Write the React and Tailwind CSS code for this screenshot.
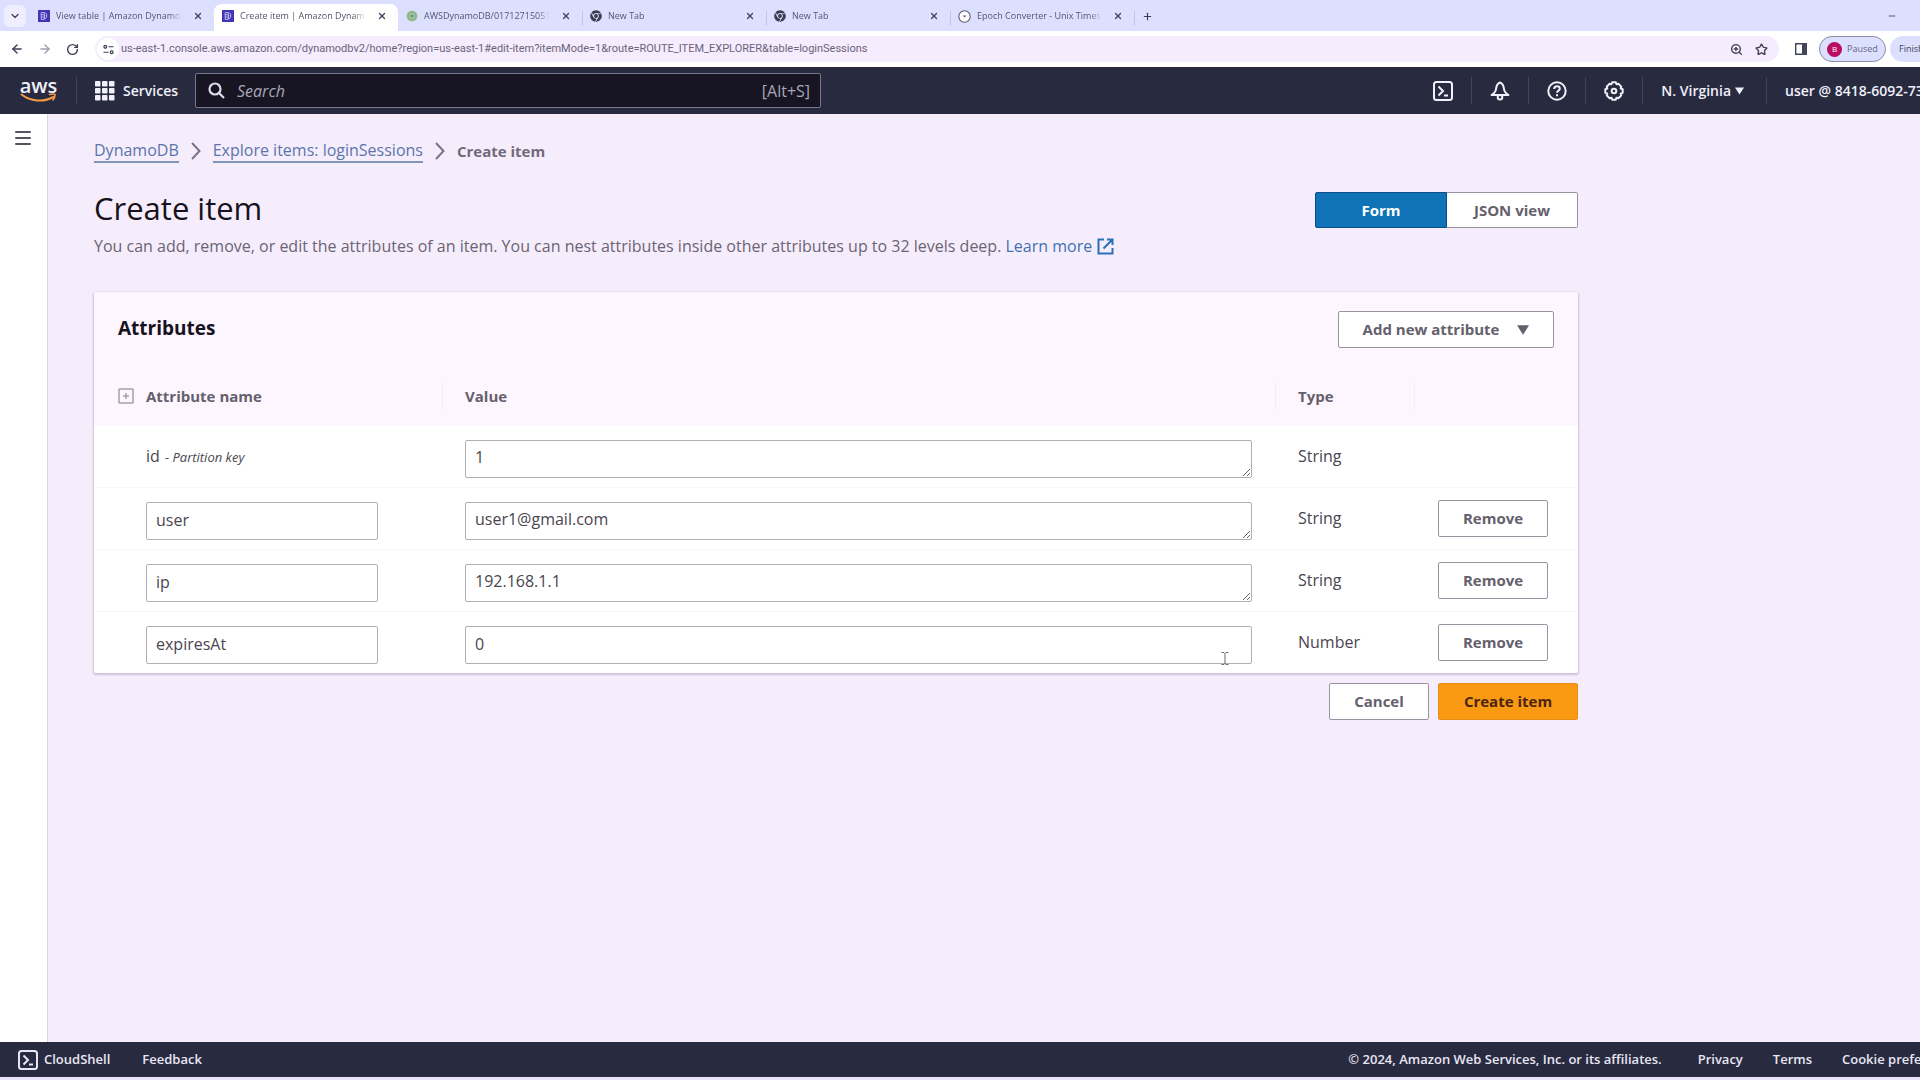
import React from "react";
import { FaChrome } from "react-icons/fa";
import { ArrowLeft, ArrowRight, ChevronDown, Minus, Plus, RotateCw, Star, X, ZoomIn } from "lucide-react";

const tabs = [
  { title: "View table | Amazon DynamoDB", icon: "dynamo" },
  { title: "Create item | Amazon DynamoDB", icon: "dynamo", active: true },
  { title: "AWSDynamoDB/0171271505199", icon: "bucket" },
  { title: "New Tab", icon: "chrome", divider: true },
  { title: "New Tab", icon: "chrome", divider: true },
  { title: "Epoch Converter - Unix Timestamp", icon: "epoch", divider: true },
];

const attributes = [
  { name: "id", value: "1", type: "String", partitionKey: true },
  { name: "user", value: "user1@gmail.com", type: "String" },
  { name: "ip", value: "192.168.1.1", type: "String" },
  { name: "expiresAt", value: "0", type: "Number" },
];

function TabIcon({ name }) {
  if (name === "chrome") return <FaChrome className="size-3 shrink-0 text-[#3c3d52]" />;
  if (name === "dynamo") {
    return (
      <svg viewBox="0 0 12 12" className="size-3 shrink-0">
        <rect width="12" height="12" rx="0.5" fill="#4235b5" />
        <path d="M3.2 2.6h3.2v6.8H3.2zM3.2 4.8h3.2M3.2 7.1h3.2M7.4 2.8l1.5 1.4-.9 1.6h1L7.3 9" fill="none" stroke="#d9d4ff" strokeWidth="0.8" />
      </svg>
    );
  }
  if (name === "bucket") {
    return (
      <svg viewBox="0 0 12 12" className="size-3 shrink-0">
        <circle cx="6" cy="6" r="5.6" fill="#a5c8a7" />
        <circle cx="6" cy="6" r="3.9" fill="none" stroke="#7fab86" strokeWidth="1.2" />
        <circle cx="6" cy="6" r="1.8" fill="#6f9f78" />
      </svg>
    );
  }
  return (
    <svg viewBox="0 0 13 13" className="size-[13px] shrink-0">
      <circle cx="6.5" cy="6.5" r="5.7" fill="#fff" stroke="#5c5c70" strokeWidth="1.1" />
      <path d="M4.7 5.5h3.6L6.5 7.6z" fill="#5c5c70" />
    </svg>
  );
}

function Caret({ className }) {
  return (
    <svg viewBox="0 0 10 8" className={className} fill="currentColor">
      <path d="M0 0h10L5 8z" />
    </svg>
  );
}

function ShellIcon() {
  return (
    <svg viewBox="0 0 20 20" className="size-5 shrink-0" fill="none" stroke="currentColor" strokeWidth="2">
      <rect x="1" y="1" width="18" height="18" rx="2.5" />
      <path d="M5.5 5.5 10 10l-4.5 4.5M11 14.5h4" />
    </svg>
  );
}

function BellIcon() {
  return (
    <svg viewBox="0 0 20 20" className="size-5" fill="none" stroke="currentColor" strokeWidth="2" strokeLinejoin="round">
      <path d="M10 1.5c-3 1-3.6 3.3-4 6.5-.3 2.8-1.6 4.3-4.5 6h17c-2.9-1.7-4.2-3.2-4.5-6-.4-3.2-1-5.5-4-6.5z" />
      <circle cx="10" cy="16.3" r="2.3" fill="#282b3f" />
    </svg>
  );
}

function HelpIcon() {
  return (
    <svg viewBox="0 0 20 20" className="size-5" fill="none" stroke="currentColor" strokeWidth="2">
      <circle cx="10" cy="10" r="8.7" />
      <path d="M7.2 8c0-1.7 1.2-2.7 2.8-2.7s2.8 1 2.8 2.4c0 1.9-2.8 2-2.8 4.1M10 13.2v2" />
    </svg>
  );
}

function GearIcon() {
  return (
    <svg viewBox="0 0 20 20" className="size-5" fill="none" stroke="currentColor" strokeWidth="2" strokeLinejoin="round">
      <path d="M8.2 1.3h3.6l.7 1.9 1.9-.5 2.9 2.9-.6 1.9 2 .7v3.6l-2 .7.6 1.9-2.9 2.9-1.9-.6-.7 2H8.200l-.7-2-1.900.6-2.900-2.900.6-1.900-2-.7V8.200l2-.7-.6-1.900 2.900-2.900 1.900.5z" />
      <circle cx="10" cy="10" r="2.3" />
    </svg>
  );
}

function BrowserChrome() {
  return (
    <div className="text-[#3f3f55]">
      <div className="flex h-[31px] items-end bg-[#dddfff] pl-1">
        <button aria-label="Search tabs" className="mr-1 mb-1 flex h-[22px] w-[22px] items-center justify-center self-end rounded-md bg-[#eeeeff]">
          <ChevronDown className="size-3" strokeWidth={2.5} />
        </button>
        {tabs.map((tab, i) => (
          <div
            key={i}
            className={`flex h-[27px] w-[184px] items-center gap-[6px] pr-[11px] pb-[3px] pl-2 ${tab.active ? "rounded-t-lg bg-white" : ""} ${tab.divider ? "bg-[linear-gradient(#c3c4e2,#c3c4e2)] bg-[length:1px_14px] bg-left bg-no-repeat" : ""}`}
          >
            <TabIcon name={tab.icon} />
            <span className="mr-[5px] min-w-0 flex-1 overflow-hidden text-[9px] whitespace-nowrap text-[#55556b] [mask-image:linear-gradient(to_right,black_90%,transparent)]">
              {tab.title}
            </span>
            <button aria-label={`Close ${tab.title}`}>
              <X className="size-[10px]" strokeWidth={3} />
            </button>
          </div>
        ))}
        <button aria-label="New tab" className="flex h-[27px] items-center bg-[linear-gradient(#c3c4e2,#c3c4e2)] bg-[length:1px_14px] bg-left bg-no-repeat pb-[3px] pl-2">
          <Plus className="size-[11px]" strokeWidth={2.5} />
        </button>
        <button aria-label="Minimize" className="mr-[23px] ml-auto flex h-[27px] items-center pb-[3px]">
          <Minus className="size-[10px]" />
        </button>
      </div>
      <div className="flex h-9 items-center bg-white pl-[10px]">
        <button aria-label="Back" className="mr-[14px]"><ArrowLeft className="size-[14px]" strokeWidth={2.5} /></button>
        <button aria-label="Forward" className="mr-[14px] text-[#a3a3b1]"><ArrowRight className="size-[14px]" strokeWidth={2.5} /></button>
        <button aria-label="Reload" className="mr-4"><RotateCw className="size-[13px]" strokeWidth={2.5} /></button>
        <div className="flex h-[26px] flex-1 items-center rounded-full bg-[#f5ecfd] pr-[11px] pl-[2px]">
          <span className="flex size-[22px] items-center justify-center rounded-full bg-white">
            <svg viewBox="0 0 12 12" className="size-[11px]" fill="none" stroke="currentColor" strokeWidth="1.3">
              <circle cx="2.5" cy="3" r="1.5" />
              <path d="M6 3h5.500M.5 9H6" />
              <circle cx="9.5" cy="9" r="1.5" />
            </svg>
          </span>
          <input
            aria-label="Address"
            defaultValue="us-east-1.console.aws.amazon.com/dynamodbv2/home?region=us-east-1#edit-item?itemMode=1&route=ROUTE_ITEM_EXPLORER&table=loginSessions"
            className="ml-[2px] min-w-0 flex-1 bg-transparent font-['Roboto',sans-serif] text-[11px] text-[#6a657a] outline-none"
          />
          <ZoomIn className="mr-3 size-[13px]" strokeWidth={2.5} />
          <Star className="size-[13px]" strokeWidth={2.5} />
        </div>
        <svg viewBox="0 0 12 12" className="mr-3 ml-4 size-3">
          <path d="M.7.7h10.600v10.600H.7z" fill="none" stroke="#44445a" strokeWidth="1.400" />
          <path d="M7 1h4.500v10H7z" fill="#44445a" />
        </svg>
        <button className="flex h-[26px] w-[67px] items-center gap-[5px] rounded-full border border-[#8b8ca8] bg-[#dddfff] pl-[7px] text-[9px] text-[#66668a]">
          <span className="flex size-[15px] items-center justify-center rounded-full bg-[#b80d62] text-[8px] text-white">B</span>
          Paused
        </button>
        <button className="ml-1 h-[26px] w-[30px] overflow-hidden rounded-l-full bg-[#dddfff] pl-[9px] text-left text-[9px] whitespace-nowrap">Finish</button>
      </div>
    </div>
  );
}

function NavDivider() {
  return <span className="h-[27px] w-px bg-[#414559]" />;
}

function ConsoleNav() {
  return (
    <header className="flex h-[47px] items-center overflow-hidden bg-[#282b3f] pl-5 text-sm font-semibold text-[#f0effa]">
      <a href="#home" aria-label="AWS home" className="flex w-[37px] flex-col items-center text-xl leading-[14px]">
        aws
        <svg viewBox="0 0 37 10" className="h-[10px] w-[37px]" fill="none" stroke="#f59b42" strokeWidth="2" strokeLinecap="round">
          <path d="M1.5 1.5c9 7 22 8 32 2.5" />
          <path d="M29.5 1.5c2.5-.7 4.5-.6 5.5 0 .3 1.8-.5 3.8-2 5.5" strokeWidth="1.5" />
        </svg>
      </a>
      <span className="mr-[18px] ml-[19px] h-[27px] w-px bg-[#414559]" />
      <button className="flex items-center gap-2">
        <svg viewBox="0 0 20 20" className="size-5" fill="currentColor">
          {[0, 7, 14].map((y) => [0, 7, 14].map((x) => <rect key={`${x}-${y}`} x={x} y={y} width="5.5" height="5.5" rx="0.8" />))}
        </svg>
        Services
      </button>
      <label className="ml-[17px] flex h-[35px] w-[626px] items-center rounded-xs border border-[#787990] bg-[#171522] pr-[10px] pl-3 text-base font-normal text-[#a9a7b8]">
        <svg viewBox="0 0 17 17" className="size-[17px] text-[#dddbea]" fill="none" stroke="currentColor" strokeWidth="2.2">
          <circle cx="7" cy="7" r="5.5" />
          <path d="m11 11 5 5" />
        </svg>
        <input type="search" aria-label="Search" placeholder="Search" className="ml-3 min-w-0 flex-1 bg-transparent italic outline-none placeholder:text-[#a9a7b8]" />
        <span>[Alt+S]</span>
      </label>
      <div className="ml-auto flex items-center gap-[18px]">
        <button aria-label="CloudShell"><ShellIcon /></button>
        <NavDivider />
        <button aria-label="Notifications"><BellIcon /></button>
        <NavDivider />
        <button aria-label="Help"><HelpIcon /></button>
        <NavDivider />
        <button aria-label="Settings"><GearIcon /></button>
        <NavDivider />
        <button className="mr-1 flex items-center gap-1 whitespace-nowrap">
          N. Virginia <Caret className="h-2 w-[9px]" />
        </button>
        <NavDivider />
        <button className="w-[135px] overflow-hidden text-left whitespace-nowrap">user @ 8418-6092-73</button>
      </div>
    </header>
  );
}

function Crumb() {
  return (
    <svg viewBox="0 0 10 18" className="h-[18px] w-[10px]" fill="none" stroke="#79738a" strokeWidth="2">
      <path d="m1 1 7.5 8L1 17" />
    </svg>
  );
}

const plainButton = "h-[37px] rounded-xs border border-[#9a94a2] bg-white text-[15px] font-bold text-[#65606c]";
const field = "block h-[38px] w-full rounded-xs border border-[#b1aeb5] bg-white px-[9px] text-base text-[#4a4550] outline-none";

function AttributeRow({ attribute, first }) {
  const { name, value, type, partitionKey } = attribute;
  const cell = `align-top ${first ? "" : "border-t border-[#f8f5fa]"}`;
  return (
    <tr>
      <td className={`${cell} pr-16 pl-[52px] ${partitionKey ? "pt-[18px]" : "pt-[14px]"}`}>
        {partitionKey ? (
          <>
            {name} <em className="ml-px text-[13px]">- Partition key</em>
          </>
        ) : (
          <input aria-label="Attribute name" defaultValue={name} className={`${field} pb-[2px]`} />
        )}
      </td>
      <td className={`${cell} px-[23px] pt-[14px] pb-[9px]`}>
        {type === "Number" ? (
          <input aria-label={`${name} value`} defaultValue={value} className={`${field} pb-[2px]`} />
        ) : (
          <textarea aria-label={`${name} value`} defaultValue={value} rows={1} className={`${field} overflow-hidden py-1`} />
        )}
      </td>
      <td className={`${cell} pt-[18px] pl-[23px]`}>{type}</td>
      <td className={`${cell} pt-3 pl-[23px]`}>
        {!partitionKey && <button className={`${plainButton} w-[110px]`}>Remove</button>}
      </td>
    </tr>
  );
}

function Attributes() {
  return (
    <section className="mt-[34px] rounded-xs bg-white shadow-[0_1px_2px_1px_#cfc3d8]">
      <div className="flex items-start justify-between bg-[#fdf6ff] px-6 pt-[19px] pb-[18px]">
        <h2 className="text-[19px] leading-[34px] font-bold text-[#17121c]">Attributes</h2>
        <button className={`${plainButton} flex w-[216px] items-center justify-center gap-[18px]`}>
          Add new attribute <Caret className="h-[10px] w-3" />
        </button>
      </div>
      <table className="w-full table-fixed border-separate border-spacing-0 text-[#4a4550]">
        <thead className="bg-[#fdf6ff] text-left text-[15px] text-[#65606c]">
          <tr>
            <th className="h-[60px] w-[348px] pl-6">
              <span className="flex items-center gap-3">
                <svg viewBox="0 0 16 16" className="size-4" fill="none" stroke="#a79fae" strokeWidth="1.5">
                  <rect x="1" y="1" width="14" height="14" rx="0.5" />
                  <path d="M8 5v6M5 8h6" />
                </svg>
                Attribute name
              </span>
            </th>
            <th>
              <span className="block border-l border-[#f3ecf6] pl-[22px] leading-7">Value</span>
            </th>
            <th className="w-[140px]">
              <span className="block border-x border-[#f3ecf6] pl-[22px] leading-7">Type</span>
            </th>
            <th className="w-[163px]" aria-label="Actions" />
          </tr>
        </thead>
        <tbody>
          {attributes.map((attribute, i) => (
            <AttributeRow key={attribute.name} attribute={attribute} first={i === 0} />
          ))}
        </tbody>
      </table>
    </section>
  );
}

function TextCursor() {
  return (
    <svg viewBox="0 0 8 13" className="pointer-events-none absolute top-[652px] left-[1221px] h-[13px] w-2" fill="none" stroke="#6c6672">
      <path d="M.5.5h2.500l1 1 1-1h2.500M.5 12.500h2.500l1-1 1 1h2.500M4 1.500v10" />
    </svg>
  );
}

export default function App() {
  return (
    <div className="relative flex min-h-screen flex-col overflow-hidden bg-[#f6edfc] font-['Open_Sans','Noto_Sans',sans-serif] text-base">
      <BrowserChrome />
      <ConsoleNav />
      <div className="flex flex-1">
        <aside className="w-12 border-r border-[#ddd3e2] bg-white pt-[17px] pl-[15px]">
          <button aria-label="Open navigation" className="flex">
            <svg viewBox="0 0 16 14" className="h-[14px] w-4" stroke="#56525e" strokeWidth="2" strokeLinecap="round">
              <path d="M1 1h14M1 7h14M1 13h14" />
            </svg>
          </button>
        </aside>
        <main className="max-w-[1530px] flex-1 pt-[25px] pl-[46px]">
          <nav className="flex items-center gap-3 text-base leading-6">
            <a href="#dynamodb" className="border-b-2 border-[#8194ba] leading-[22px] text-[#5b75ab]">DynamoDB</a>
            <Crumb />
            <a href="#explore" className="border-b-2 border-[#8194ba] leading-[22px] text-[#5b75ab]">Explore items: loginSessions</a>
            <Crumb />
            <span className="text-[15px] leading-[22px] font-bold text-[#716a7a]">Create item</span>
          </nav>
          <div className="mt-[25px] flex items-end justify-between">
            <h1 className="text-[31px] leading-10 text-[#17121c]">Create item</h1>
            <div className="flex text-[15px] font-bold">
              <button className="h-9 w-[132px] rounded-l-xs border border-[#0b4f86] bg-[#1073b8] text-white">Form</button>
              <button className="h-9 w-[131px] rounded-r-xs border border-l-0 border-[#9a94a2] bg-white text-[#65606c]">JSON view</button>
            </div>
          </div>
          <p className="mt-[6px] leading-6 text-[#6b6474]">
            You can add, remove, or edit the attributes of an item. You can nest attributes inside other attributes up to 32 levels deep.{" "}
            <a href="#learn" className="inline-flex items-center gap-[5px] text-[#4170b4]">
              Learn more
              <svg viewBox="0 0 17 17" className="size-[17px]" fill="none" stroke="#2c71b8" strokeWidth="2">
                <path d="M7 1.500H1.500v14h14V10M10 1.500h5.500V7M15.500 1.500 6.500 10.500" />
              </svg>
            </a>
          </p>
          <Attributes />
          <div className="mt-[10px] flex justify-end gap-[9px]">
            <button className={`${plainButton} w-[100px]`}>Cancel</button>
            <button className="h-[37px] w-[140px] rounded-xs border border-[#e58f1a] bg-[#f99a12] text-[15px] font-bold text-[#4c2412]">Create item</button>
          </div>
        </main>
      </div>
      <footer className="flex h-[38px] items-center overflow-hidden border-b-[3px] border-[#e8e3fb] bg-[#282b3f] pl-[18px] text-[13px] font-semibold whitespace-nowrap text-[#e8e6f4]">
        <button className="flex items-center gap-[6px]"><ShellIcon /> CloudShell</button>
        <a href="#feedback" className="ml-8">Feedback</a>
        <span className="ml-auto">© 2024, Amazon Web Services, Inc. or its affiliates.</span>
        <a href="#privacy" className="ml-9">Privacy</a>
        <a href="#terms" className="ml-[30px]">Terms</a>
        <a href="#cookies" className="ml-[30px] w-[78px] overflow-hidden">Cookie prefe</a>
      </footer>
      <TextCursor />
    </div>
  );
}
